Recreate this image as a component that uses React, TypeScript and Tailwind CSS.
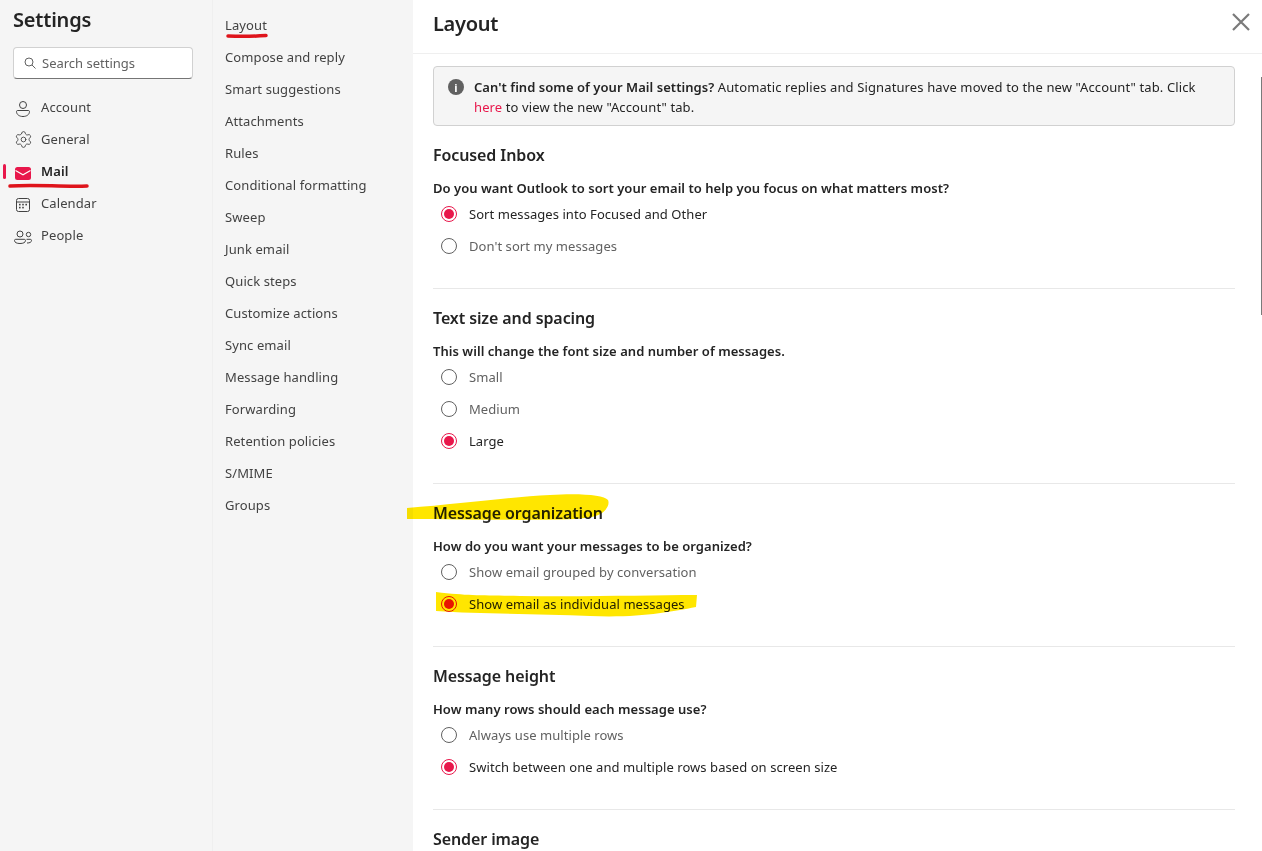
// App.tsx
import React from "react";
import { Settings } from "lucide-react";

const font = { fontFamily: '"Noto Sans", "Open Sans", sans-serif' };

const subItems = [
  "Layout",
  "Compose and reply",
  "Smart suggestions",
  "Attachments",
  "Rules",
  "Conditional formatting",
  "Sweep",
  "Junk email",
  "Quick steps",
  "Customize actions",
  "Sync email",
  "Message handling",
  "Forwarding",
  "Retention policies",
  "S/MIME",
  "Groups",
];

const AccountIcon = () => (
  <svg width="20" height="20" viewBox="0 0 20 20" fill="none" stroke="#424242" strokeWidth="1">
    <circle cx="10" cy="8" r="3.5" />
    <path d="M3.5 14.5c0-.8.7-1 1.2-1h10.6c.5 0 1.2.2 1.2 1 0 3-2.8 5-6.5 5s-6.5-2-6.5-5z" />
  </svg>
);

const MailIcon = () => (
  <svg width="20" height="20" viewBox="0 0 20 20">
    <rect x="2" y="6" width="16" height="13" rx="2.5" fill="#e8174b" />
    <path d="M2.5 9.5L10 13.8l7.5-4.3" fill="none" stroke="#fff" strokeWidth="1.1" />
  </svg>
);

const CalendarIcon = () => (
  <svg width="20" height="20" viewBox="0 0 20 20" fill="none" stroke="#424242" strokeWidth="1">
    <rect x="3.5" y="5.5" width="13" height="13" rx="2" />
    <path d="M3.5 9h13" />
    <g fill="#424242" stroke="none">
      <rect x="6" y="10.8" width="1.6" height="1.6" />
      <rect x="9.2" y="10.8" width="1.6" height="1.6" />
      <rect x="12.4" y="10.8" width="1.6" height="1.6" />
      <rect x="6" y="13.8" width="1.6" height="1.6" />
      <rect x="9.2" y="13.8" width="1.6" height="1.6" />
    </g>
  </svg>
);

const PeopleIcon = () => (
  <svg width="20" height="20" viewBox="0 0 20 20" fill="none" stroke="#424242" strokeWidth="1">
    <circle cx="7" cy="9" r="3" />
    <circle cx="15.5" cy="9.5" r="2.2" />
    <path d="M1.5 15.5c0-.8.5-1.2 1.2-1.2h8.6c.7 0 1.2.4 1.2 1.2 0 2-2.3 3-5.5 3s-5.5-1-5.5-3z" />
    <path d="M14 18c2.8 0 4.5-.8 4.5-2.6 0-.7-.5-1.1-1.2-1.1h-3.8" />
  </svg>
);

const navItems = [
  { label: "Account", icon: <AccountIcon /> },
  { label: "General", icon: <Settings size={19} strokeWidth={1.1} color="#424242" /> },
  { label: "Mail", icon: <MailIcon />, active: true },
  { label: "Calendar", icon: <CalendarIcon /> },
  { label: "People", icon: <PeopleIcon /> },
];

const Radio = ({ label, checked }: { label: string; checked?: boolean }) => (
  <div className="flex h-8 items-center pl-2">
    <span
      className={`flex h-4 w-4 items-center justify-center rounded-full border ${
        checked ? "border-[#e8174b]" : "border-[#616161]"
      }`}
    >
      {checked && <span className="h-[10px] w-[10px] rounded-full bg-[#e8174b]" />}
    </span>
    <span className={`ml-3 pt-[2px] text-[13px] tracking-[0.06px] ${checked ? "text-[#242424]" : "text-[#616161]"}`}>
      {label}
    </span>
  </div>
);

const Section = ({
  title,
  question,
  options,
}: {
  title: string;
  question: string;
  options: { label: string; checked?: boolean }[];
}) => (
  <section className="border-b border-[#e8e8e8] pb-[26px]">
    <h2 className="pt-[17px] text-[16px] leading-6 font-semibold tracking-[-0.1px] text-[#242424]">{title}</h2>
    <p className="mt-[11px] text-[13px] leading-5 font-semibold tracking-[0.04px] text-[#242424]">{question}</p>
    {options.map((o) => (
      <Radio key={o.label} label={o.label} checked={o.checked} />
    ))}
  </section>
);

export default function App() {
  return (
    <div className="relative flex h-[851px] w-[1262px] overflow-hidden bg-white" style={font}>
      {/* settings nav */}
      <aside className="w-[213px] shrink-0 border-r border-[#efefef] bg-[#f5f5f5] px-[13px]">
        <h1 className="pt-[6px] text-[20px] leading-7 font-semibold tracking-[-0.2px] text-[#242424]">Settings</h1>
        <div className="mt-[13px] flex h-8 w-[180px] items-center rounded border border-[#d1d1d1] border-b-[#757575] bg-white pl-2">
          <svg width="16" height="16" viewBox="0 0 16 16" fill="none" stroke="#616161" strokeWidth="1">
            <circle cx="7" cy="7" r="4" />
            <path d="M10 10l3.5 3.5" />
          </svg>
          <span className="ml-1 pt-[2px] text-[13px] text-[#616161]">Search settings</span>
        </div>
        <nav className="mt-3">
          {navItems.map((item) => (
            <div key={item.label} className="relative flex h-8 items-center">
              {item.active && <span className="absolute -left-[10px] h-[15px] w-[3px] rounded bg-[#e8174b]" />}
              <span className="flex w-5 items-center justify-center">{item.icon}</span>
              <span
                className={`ml-2 pt-[2px] text-[13px] tracking-[0.1px] ${
                  item.active ? "font-semibold text-[#242424]" : "text-[#424242]"
                }`}
              >
                {item.label}
              </span>
            </div>
          ))}
        </nav>
      </aside>

      {/* sub nav */}
      <div className="w-[200px] shrink-0 bg-[#f5f5f5] px-3 pt-[9px]">
        {subItems.map((s) => (
          <div key={s} className="flex h-8 items-center pt-[2px] text-[13px] tracking-[0.1px] text-[#424242]">
            {s}
          </div>
        ))}
      </div>

      {/* main panel */}
      <main className="min-w-0 flex-1">
        <header className="flex h-[54px] items-start justify-between border-b border-[#efefef] pt-[10px] pr-3 pl-5">
          <h1 className="text-[20px] leading-7 font-semibold tracking-[-0.3px] text-[#242424]">Layout</h1>
          <svg width="18" height="18" viewBox="0 0 18 18" stroke="#7a7a7a" strokeWidth="2.2" className="mt-[3px]">
            <path d="M1 1l16 16M17 1L1 17" />
          </svg>
        </header>
        <div className="mr-[27px] ml-5">
          <div className="mt-3 flex h-[60px] rounded border border-[#d1d1d1] bg-[#f5f5f5] pt-[10px] pl-[14px]">
            <span className="mt-[2px] flex h-4 w-4 shrink-0 items-center justify-center rounded-full bg-[#616161] text-[11px] leading-none font-bold text-white">
              i
            </span>
            <p className="ml-[10px] text-[13px] leading-5 tracking-[0.12px] text-[#242424]">
              <span className="font-semibold tracking-[0.05px]">Can't find some of your Mail settings?</span> Automatic
              replies and Signatures have moved to the new "Account" tab. Click
              <br />
              <span className="text-[#e8174b]">here</span> to view the new "Account" tab.
            </p>
          </div>
          <Section
            title="Focused Inbox"
            question="Do you want Outlook to sort your email to help you focus on what matters most?"
            options={[{ label: "Sort messages into Focused and Other", checked: true }, { label: "Don't sort my messages" }]}
          />
          <Section
            title="Text size and spacing"
            question="This will change the font size and number of messages."
            options={[{ label: "Small" }, { label: "Medium" }, { label: "Large", checked: true }]}
          />
          <Section
            title="Message organization"
            question="How do you want your messages to be organized?"
            options={[{ label: "Show email grouped by conversation" }, { label: "Show email as individual messages", checked: true }]}
          />
          <Section
            title="Message height"
            question="How many rows should each message use?"
            options={[
              { label: "Always use multiple rows" },
              { label: "Switch between one and multiple rows based on screen size", checked: true },
            ]}
          />
          <h2 className="pt-[17px] text-[16px] leading-6 font-semibold tracking-[-0.1px] text-[#242424]">Sender image</h2>
        </div>
      </main>

      {/* scrollbar thumb */}
      <span className="absolute top-[77px] right-0 h-[238px] w-px bg-[#7a7a7a]" />

      {/* hand-drawn annotations over the screenshot */}
      <svg className="pointer-events-none absolute inset-0 mix-blend-multiply" width="1262" height="851" viewBox="0 0 1262 851" fill="none">
        <path d="M407 508C460 504 510 497 550 495C580 493 604 495 608 500C610 505 606 510 602 513C598 516 590 518 575 519C520 521 460 519 407 519Z" fill="#ffe600" />
        <path d="M436 592C470 596 480 595 520 596C590 597 650 595 697 595L696 607C670 612 640 618 590 616C540 614 480 614 436 611Z" fill="#ffe600" />
        <path d="M10 186C35 184 60 187 87 186" stroke="#e8141c" strokeWidth="3.5" strokeLinecap="round" />
        <path d="M228 36C240 36.5 252 36.5 266 35.5" stroke="#e8141c" strokeWidth="3.5" strokeLinecap="round" />
      </svg>
    </div>
  );
}
